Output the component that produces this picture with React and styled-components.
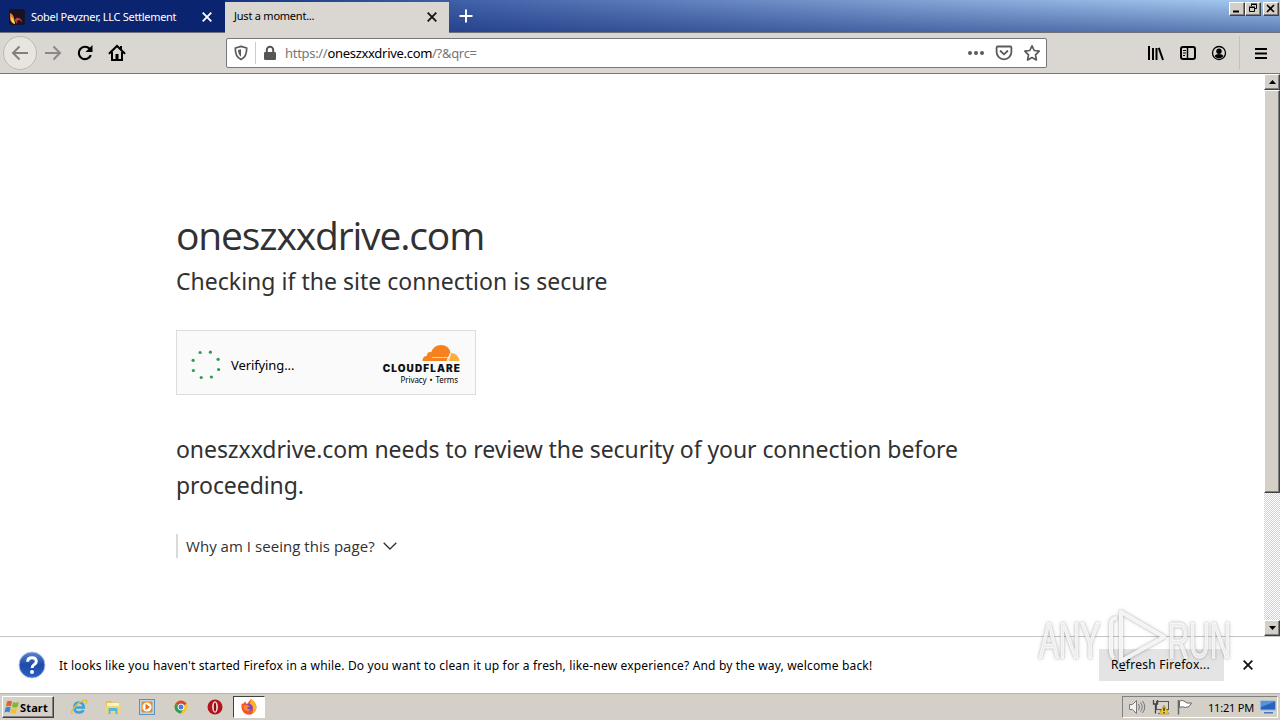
import React from "react";
import styled, { createGlobalStyle } from "styled-components";

const App = () => {
  return (
    <Screen>
      <GlobalStyle />
      <TabBar>
        <Tab>
          <FaviconIcon />
          <TabTitle $spacing="-0.3px">Sobel Pevzner, LLC Settlement</TabTitle>
          <CloseIcon color="#fff" />
        </Tab>
        <Tab $active>
          <TabTitle $spacing="-0.23px">Just a moment...</TabTitle>
          <CloseIcon color="#111" />
        </Tab>
        <NewTab>
          <PlusIcon />
        </NewTab>
        <WindowButtons />
      </TabBar>
      <Toolbar />
      <Main>
        <Page />
        <ScrollBar />
      </Main>
      <Notice />
      <TaskBar />
      <Watermark />
    </Screen>
  );
};

export default App;

const WindowButtons = () => {
  return (
    <WinGroup>
      <WinButton>
        <svg width="13" height="11" viewBox="0 0 13 11">
          <path d="M3 8.5h6" stroke="#000" strokeWidth="2" />
        </svg>
      </WinButton>
      <WinButton>
        <svg width="13" height="11" viewBox="0 0 13 11" fill="none" stroke="#000">
          <path d="M5.5 3V1.5h5v4H9M5 1h6" />
          <path d="M3.5 4.5h5v4h-5zM3 4h6" />
        </svg>
      </WinButton>
      <WinButton $gap>
        <svg width="13" height="11" viewBox="0 0 13 11">
          <path d="M3 2l7 7M10 2L3 9" stroke="#000" strokeWidth="1.6" />
        </svg>
      </WinButton>
    </WinGroup>
  );
};

const Toolbar = () => {
  return (
    <ToolRow>
      <BackButton>
        <svg width="20" height="20" viewBox="0 0 20 20" fill="none" stroke="#82807d" strokeWidth="2">
          <path d="M18 10H3M9.5 3.5L3 10l6.5 6.5" />
        </svg>
      </BackButton>
      <ToolButton>
        <svg width="20" height="20" viewBox="0 0 20 20" fill="none" stroke="#8b8986" strokeWidth="2">
          <path d="M2 10h15M10.5 3.5L17 10l-6.5 6.5" />
        </svg>
      </ToolButton>
      <ToolButton>
        <svg width="18" height="18" viewBox="0 0 18 18" fill="none" stroke="#000" strokeWidth="2.2">
          <path d="M14.8 11.2A6.2 6.2 0 1 1 13.6 4.8" />
          <path d="M16.5 1v7H9.5z" fill="#000" stroke="none" />
        </svg>
      </ToolButton>
      <ToolButton>
        <svg width="18" height="18" viewBox="0 0 18 18">
          <path d="M1.5 9.3L9 2l7.5 7.3" fill="none" stroke="#000" strokeWidth="2" strokeLinecap="round" />
          <path d="M4 8v8h10V8" fill="none" stroke="#000" strokeWidth="2" />
          <path d="M7.5 10h3v6h-3zM12 2h2v4h-2z" fill="#000" />
        </svg>
      </ToolButton>
      <UrlBar>
        <ShieldBox>
          <svg width="14" height="16" viewBox="0 0 14 16">
            <path d="M7 1.4L12.7 3c.1 5.8-1.3 9.6-5.7 11.5C2.6 12.6 1.2 8.8 1.3 3z" fill="none" stroke="#5a5a5a" strokeWidth="1.7" strokeLinejoin="round" />
            <path d="M7 4.2L4 5c.2 3.3 1 5.3 3 6.7z" fill="#5a5a5a" />
          </svg>
        </ShieldBox>
        <LockBox>
          <svg width="14" height="16" viewBox="0 0 14 16">
            <rect x="1" y="7" width="12" height="8" rx="1.2" fill="#555" />
            <path d="M3.8 8V5a3.2 3.2 0 0 1 6.4 0v3" fill="none" stroke="#555" strokeWidth="2" />
          </svg>
        </LockBox>
        <Url>
          https://<UrlHost>oneszxxdrive.com</UrlHost>/?&amp;qrc=
        </Url>
        <UrlActions>
          <svg width="18" height="16" viewBox="0 0 18 16" fill="#5a5a5a">
            <circle cx="3" cy="8" r="2" />
            <circle cx="9" cy="8" r="2" />
            <circle cx="15" cy="8" r="2" />
          </svg>
          <svg width="18" height="16" viewBox="0 0 18 16" fill="none" stroke="#5a5a5a" strokeWidth="1.8">
            <path d="M2.8 1.5h12.4q1.2 0 1.2 1.2V7a7.4 7.4 0 0 1-14.8 0V2.7q0-1.2 1.2-1.2z" />
            <path d="M5.5 6L9 9.3 12.5 6" strokeLinecap="round" />
          </svg>
          <svg width="18" height="18" viewBox="0 0 18 18" fill="none" stroke="#5a5a5a" strokeWidth="1.7">
            <path d="M9 1.8l2.2 4.7 5 .7-3.7 3.6.9 5.2L9 13.5 4.6 16l.9-5.2L1.8 7.2l5-.7z" strokeLinejoin="round" />
          </svg>
        </UrlActions>
      </UrlBar>
      <RightTools>
        <svg width="18" height="16" viewBox="0 0 18 16" stroke="#000" strokeWidth="2">
          <path d="M2 1v14M6 3v12M9.5 3v12M11.8 2.8L16 15" fill="none" />
        </svg>
        <svg width="18" height="16" viewBox="0 0 18 16" fill="none" stroke="#000">
          <rect x="2" y="2" width="14" height="12" rx="2" strokeWidth="2" />
          <path d="M8.5 2v12" strokeWidth="1.5" />
          <path d="M4 5.5h3M4 8h3M4 10.5h2" />
        </svg>
        <svg width="16" height="16" viewBox="0 0 16 16">
          <circle cx="8" cy="8" r="6.5" fill="none" stroke="#000" strokeWidth="1.3" />
          <circle cx="8" cy="6.3" r="2.7" />
          <path d="M3.5 11q1-2 4.5-2t4.5 2Q11 13.3 8 13.3T3.5 11z" />
        </svg>
      </RightTools>
      <MenuButton>
        <svg width="12" height="13" viewBox="0 0 12 13" stroke="#000" strokeWidth="2">
          <path d="M0 2h12M0 6.5h12M0 11h12" />
        </svg>
      </MenuButton>
    </ToolRow>
  );
};

const Page = () => {
  return (
    <Content>
      <Title>oneszxxdrive.com</Title>
      <SubTitle>Checking if the site connection is secure</SubTitle>
      <Challenge>
        <Spinner />
        <Verifying>Verifying...</Verifying>
        <Brand>
          <CloudIcon />
          <BrandName>CLOUDFLARE</BrandName>
          <BrandLinks>
            <span>Privacy</span>
            <span>•</span>
            <span>Terms</span>
          </BrandLinks>
        </Brand>
      </Challenge>
      <Message>
        oneszxxdrive.com needs to review the security of your connection before
        <br />
        proceeding.
      </Message>
      <Why>
        <span>Why am I seeing this page?</span>
        <svg width="14" height="8" viewBox="0 0 14 8" fill="none" stroke="#333" strokeWidth="1.3">
          <path d="M.7 .7L7 7 13.3 .7" />
        </svg>
      </Why>
    </Content>
  );
};

const Spinner = () => {
  const dots = [
    [9.5, 3.5], [19.8, 3.2], [27.5, 10.3], [28, 20.5],
    [20.8, 28], [10.6, 28.5], [2.8, 21.5], [2.5, 11.3],
  ];
  return (
    <svg width="31" height="32" viewBox="0 0 31 32">
      {dots.map(([x, y]) => (
        <circle key={x} cx={x - 0.4} cy={y} r="1.6" fill="#2f9a55" />
      ))}
    </svg>
  );
};

const ScrollBar = () => {
  return (
    <Track>
      <ArrowButton>
        <svg width="7" height="4" viewBox="0 0 7 4">
          <path d="M0 4L3.5 0 7 4z" />
        </svg>
      </ArrowButton>
      <Thumb />
      <ArrowButton $bottom>
        <svg width="7" height="4" viewBox="0 0 7 4">
          <path d="M0 0h7L3.5 4z" />
        </svg>
      </ArrowButton>
    </Track>
  );
};

const Notice = () => {
  return (
    <NoticeBar>
      <svg width="28" height="28" viewBox="0 0 28 28">
        <defs>
          <linearGradient id="help" x1="0" y1="0" x2="0" y2="1">
            <stop offset="0" stopColor="#5c83cf" />
            <stop offset=".5" stopColor="#1d4aa8" />
            <stop offset="1" stopColor="#2d62c4" />
          </linearGradient>
        </defs>
        <circle cx="14" cy="14" r="13" fill="url(#help)" stroke="#a9bfe6" />
        <path d="M9.6 10.8Q9.8 6.8 14 6.8t4.3 3.7q0 2-2.3 3.3-1.9 1.1-1.9 3.2" fill="none" stroke="#fff" strokeWidth="3" />
        <circle cx="14" cy="21" r="2" fill="#fff" />
      </svg>
      <NoticeText>
        It looks like you haven't started Firefox in a while. Do you want to clean it up for a fresh, like-new experience? And by the way, welcome back!
      </NoticeText>
      <RefreshButton>
        R<u>e</u>fresh Firefox...
      </RefreshButton>
      <NoticeClose>
        <CloseIcon color="#111" />
      </NoticeClose>
    </NoticeBar>
  );
};

const TaskBar = () => {
  return (
    <Tasks>
      <StartButton>
        <WindowsIcon />
        <span>Start</span>
      </StartButton>
      <QuickLaunch>
        <IeIcon />
        <FolderIcon />
        <PlayerIcon />
        <ChromeIcon />
        <OperaIcon />
      </QuickLaunch>
      <ActiveTask>
        <FirefoxIcon />
      </ActiveTask>
      <Tray>
        <SpeakerIcon />
        <NetworkIcon />
        <FlagIcon />
        <Clock>11:21 PM</Clock>
        <DesktopIcon />
      </Tray>
    </Tasks>
  );
};

const Watermark = () => {
  return (
    <Mark>
      <svg width="210" height="76" viewBox="0 0 210 76">
        <g fill="#fff" fillOpacity=".75" stroke="#fff" strokeOpacity=".7" strokeWidth="1.5" fontFamily="Liberation Sans Narrow, Liberation Sans, sans-serif" fontSize="50">
          <text x="9" y="54" textLength="61" lengthAdjust="spacingAndGlyphs">ANY</text>
          <text x="138" y="54" textLength="63" lengthAdjust="spacingAndGlyphs">RUN</text>
        </g>
        <g fill="none" stroke="#fff" strokeOpacity=".85" strokeWidth="4" strokeLinejoin="round">
          <path d="M91 8L134 33 91 57z" />
          <path d="M87 14q-6 0-6 6v26q0 6 3 8" />
        </g>
      </svg>
    </Mark>
  );
};

const CloseIcon = ({ color }) => (
  <svg width="12" height="12" viewBox="0 0 12 12">
    <path d="M1.7 1.7l8.6 8.6M10.3 1.7L1.7 10.3" stroke={color} strokeWidth="1.8" />
  </svg>
);

const PlusIcon = () => (
  <svg width="14" height="14" viewBox="0 0 14 14">
    <path d="M7 .5v13M.5 7h13" stroke="#fff" strokeWidth="2" />
  </svg>
);

const FaviconIcon = () => (
  <svg width="16" height="16" viewBox="0 0 16 16">
    <rect width="16" height="16" rx="3" fill="#171321" />
    <path d="M1 4q3 1 4 5l1 6Q1 14 1 9z" fill="#e8862c" />
    <path d="M2 8q3 2 4 7-4-1-4-7z" fill="#f7dc4c" />
    <path d="M6 12q0-4 4-3 3 1 3 5-1-3-3-3t-2 4z" fill="#c83a4a" />
  </svg>
);

const CloudIcon = () => (
  <svg width="38" height="18" viewBox="0 0 38 18">
    <path d="M.5 17Q.5 12 5 11.8 5 7.500 9 8.200 12 1 19 1q8 0 9.500 8L26 17z" fill="#f6821f" />
    <path d="M27 17l2-8q7 0 8.500 8z" fill="#fbad41" />
    <path d="M10 13.500h17" stroke="#fcd3a8" strokeWidth="1" />
    <path d="M25 17l3.500-8" stroke="#fff" strokeWidth="1" />
  </svg>
);

const WindowsIcon = () => (
  <svg width="16" height="16" viewBox="0 0 16 16">
    <path d="M3 2.5q2.5-1.5 5 0L7 7.5q-2.5-1.5-5 0z" fill="#e3622a" />
    <path d="M9 3q2.5 1.5 6 0l-1.5 5q-3 1-5.5 0z" fill="#7cb83c" />
    <path d="M1.7 8.500q2.500-1.500 5 0l-1.200 5q-2.500-1.500-5 0z" fill="#3c86d2" />
    <path d="M7.700 9q2.500 1.500 5.500 0L12 14q-3 1-5.500 0z" fill="#f2c22e" />
  </svg>
);

const IeIcon = () => (
  <svg width="18" height="18" viewBox="0 0 18 18" fill="none">
    <path d="M4.5 9.5h9.3Q13.5 4.5 9 4.5T4.3 9.5t5 5q3 0 4.2-2.3" stroke="#3aa2dc" strokeWidth="2.6" />
    <path d="M2.5 16Q-.5 14.5 5 8.5q6-6 10.500-6.500 2.500 0 .5 4" stroke="#e8bf3c" strokeWidth="1.4" />
  </svg>
);

const FolderIcon = () => (
  <svg width="18" height="18" viewBox="0 0 18 18">
    <path d="M2 3h5l1 1.5h7V15H2z" fill="#e2c25c" />
    <path d="M3 5h12v4H3z" fill="#fbf3c0" />
    <path d="M1.5 8h15v7h-15z" fill="#f0d67a" />
    <path d="M4.5 16v-5q0-1 1-1h7q1 0 1 1v5h-2v-3h-5v3z" fill="#58b5dd" />
  </svg>
);

const PlayerIcon = () => (
  <svg width="18" height="18" viewBox="0 0 18 18">
    <rect x="1.5" y="1.5" width="15" height="15" fill="#b8d7ee" stroke="#4f94cc" />
    <rect x="3.5" y="3.5" width="11" height="11" rx="1" fill="#f08a1c" />
    <circle cx="9" cy="9" r="4.5" fill="#fff" />
    <path d="M7.5 5.8L12 9l-4.5 3.2z" fill="#e56f10" />
  </svg>
);

const ChromeIcon = () => (
  <svg width="18" height="18" viewBox="0 0 18 18">
    <circle cx="9" cy="9" r="6.5" fill="#f6c72c" />
    <path d="M3.4 5.8A6.5 6.5 0 0 1 14.6 5.8L9 9z" fill="#dc4437" />
    <path d="M3.4 5.8A6.5 6.5 0 0 0 9 15.5L11 11 9 9z" fill="#2f9d58" />
    <circle cx="9" cy="9" r="3" fill="#3f7fe0" stroke="#fff" />
  </svg>
);

const OperaIcon = () => (
  <svg width="18" height="18" viewBox="0 0 18 18">
    <circle cx="9" cy="9" r="7.5" fill="#b3141b" />
    <ellipse cx="9" cy="9" rx="2.9" ry="5.7" fill="#f3dcdc" />
    <ellipse cx="9" cy="9" rx="1.200" ry="4.500" fill="#8c0e14" />
  </svg>
);

const FirefoxIcon = () => (
  <svg width="18" height="18" viewBox="0 0 18 18">
    <path d="M2 5q0 1 1 1 1-2 2.5-2.5Q5.5 5 7 6l4-5q5 3 5.5 8a7.5 7.5 0 0 1-15 .5Q1.3 7 2 5z" fill="#f7522f" />
    <path d="M11 1q5 3 5.5 8a7 7 0 0 1-4.5 6.5Q15 9 10 6z" fill="#fcb827" />
    <circle cx="9" cy="9.5" r="3.5" fill="#7b43d6" />
    <path d="M3.5 8q2-1.5 4.5-.5l2 .5-3 2q1 2 4 1-2 3-5 1.5T3.5 8z" fill="#fb8a2a" />
  </svg>
);

const SpeakerIcon = () => (
  <svg width="18" height="16" viewBox="0 0 18 16" fill="none" stroke="#77787a">
    <path d="M1.5 5.5h3l4-4v13l-4-4h-3z" fill="#f2f2f0" />
    <path d="M10.5 5q2 3 0 6M12.5 3.5q3.5 4.5 0 9M14.5 2q4.5 6 0 12" />
  </svg>
);

const NetworkIcon = () => (
  <svg width="18" height="16" viewBox="0 0 18 16">
    <rect x="4.5" y="2.5" width="12" height="8" fill="#d5d5d2" stroke="#555" />
    <path d="M9 11v4M6 14.5h7" stroke="#555" />
    <path d="M1.5 1v4h4V1M3.5 5v9.5" fill="none" stroke="#444" strokeWidth="1.3" />
    <path d="M12 6l5 9H7z" fill="#f4cd22" stroke="#a9850c" strokeWidth=".6" />
    <path d="M12 8.5v3.5M12 13v1.2" stroke="#222" strokeWidth="1.3" />
  </svg>
);

const FlagIcon = () => (
  <svg width="18" height="16" viewBox="0 0 18 16">
    <path d="M2.5 1v14.5" stroke="#666" strokeWidth="1.5" />
    <path d="M3.5 2q3-1.5 5.5.5 1 1 2 1.500h4.500q-2 5-6 4.500-3-1.500-6 0z" fill="#fff" stroke="#666" />
  </svg>
);

const DesktopIcon = () => (
  <svg width="16" height="14" viewBox="0 0 16 14">
    <path d="M.5 1h15v9H.5z" fill="#2563bd" stroke="#8fb4de" />
    <path d="M1 1.5h14L1 7z" fill="#5a93dc" />
    <path d="M4 12h9v1.5H4z" fill="#4c78b5" />
  </svg>
);

const GlobalStyle = createGlobalStyle`
  * {
    box-sizing: border-box;
  }
  body {
    margin: 0;
    overflow: hidden;
    font-family: "Noto Sans", "Open Sans", sans-serif;
    color: #000;
  }
  svg {
    display: block;
    flex: none;
  }
`;

const Screen = styled.div`
  position: relative;
  width: 1280px;
  height: 720px;
  display: flex;
  flex-direction: column;
  background: #fff;
  overflow: hidden;
  white-space: nowrap;
`;

const TabBar = styled.div`
  display: flex;
  height: 33px;
  flex: none;
  border-bottom: 1px solid #6e7075;
  background:
    linear-gradient(to bottom, rgba(0, 0, 0, 0), rgba(10, 35, 110, 0.48)),
    linear-gradient(to right, #0a246a, #0f2f80 200px, #4061a8 460px, #7f9fd3 900px, #a6cdf2);
`;

const Tab = styled.div`
  display: flex;
  align-items: center;
  width: ${(props) => (props.$active ? "224px" : "225px")};
  height: ${(props) => (props.$active ? "31px" : "32px")};
  margin-top: ${(props) => (props.$active ? "2px" : "0")};
  margin-bottom: -1px;
  padding: ${(props) => (props.$active ? "0 11px 2px 9px" : "2px 12px 0 9px")};
  color: ${(props) => (props.$active ? "#000" : "#fff")};
  background: ${(props) => (props.$active ? "#dad6d1" : "#0a246f")};
  gap: 6px;
`;

const TabTitle = styled.span`
  flex: 1;
  font-size: 11px;
  line-height: 14px;
  padding-bottom: 1px;
  letter-spacing: ${(props) => props.$spacing};
`;

const NewTab = styled.div`
  flex: 1;
  padding: 9px 0 0 10px;
`;

const WinGroup = styled.div`
  display: flex;
  padding: 2px 1px 0 0;
`;

const WinButton = styled.div`
  width: 16px;
  height: 14px;
  margin-left: ${(props) => (props.$gap ? "2px" : "0")};
  background: #d4d0c8;
  border: 1px solid;
  border-color: #fff #404040 #404040 #fff;
  box-shadow: inset -1px -1px #808080;
`;

const ToolRow = styled.div`
  display: flex;
  align-items: center;
  flex: none;
  height: 41px;
  padding: 0 0 0 3px;
  background: #dad6d1;
  border-bottom: 1px solid #77777a;
`;

const BackButton = styled.div`
  display: flex;
  align-items: center;
  justify-content: center;
  width: 34px;
  height: 34px;
  border-radius: 50%;
  border: 1px solid #bdb9b4;
  background: #e8e5e1;
`;

const ToolButton = styled.div`
  display: flex;
  align-items: center;
  justify-content: center;
  width: 32px;
  height: 32px;
`;

const UrlBar = styled.div`
  display: flex;
  align-items: center;
  width: 821px;
  height: 30px;
  margin-left: 93px;
  background: #fff;
  border: 1px solid #77777a;
  border-radius: 2px;
`;

const ShieldBox = styled.div`
  width: 29px;
  padding-left: 7px;
  height: 22px;
  display: flex;
  align-items: center;
  border-right: 1px solid #ccc;
`;

const LockBox = styled.div`
  width: 29px;
  padding-left: 7px;
`;

const Url = styled.span`
  flex: 1;
  font-size: 13px;
  color: #777;
  letter-spacing: -0.3px;
`;

const UrlHost = styled.span`
  color: #000;
`;

const UrlActions = styled.div`
  display: flex;
  align-items: center;
  gap: 10px;
  padding-right: 5px;
`;

const RightTools = styled.div`
  flex: 1;
  display: flex;
  align-items: center;
  justify-content: flex-end;
  gap: 14px;
  padding-right: 12px;
`;

const MenuButton = styled.div`
  width: 41px;
  height: 34px;
  padding-left: 15px;
  display: flex;
  align-items: center;
  border-left: 1px solid #c5c1bc;
`;

const Main = styled.div`
  display: flex;
  flex: none;
  height: 562px;
`;

const Content = styled.div`
  flex: 1;
  padding: 131px 0 0 176px;
  color: #313131;
`;

const Title = styled.h1`
  margin: 0;
  height: 60px;
  font-family: "Open Sans", "Noto Sans", sans-serif;
  font-weight: 400;
  font-size: 39px;
  line-height: 60px;
  letter-spacing: -1.15px;
`;

const SubTitle = styled.h2`
  margin: 0;
  font-weight: 400;
  font-size: 23px;
  line-height: 32px;
  letter-spacing: 0.02px;
`;

const Challenge = styled.div`
  display: flex;
  align-items: center;
  width: 300px;
  height: 65px;
  margin-top: 33px;
  padding: 4px 15px 0 14px;
  background: #fafafa;
  border: 1px solid #ddd;
`;

const Verifying = styled.span`
  flex: 1;
  margin-left: 9px;
  font-size: 13px;
  letter-spacing: -0.1px;
  color: #000;
`;

const Brand = styled.div`
  display: flex;
  flex-direction: column;
  align-items: flex-end;
`;

const BrandName = styled.span`
  margin-top: 1px;
  font-family: Inter, "Liberation Sans", sans-serif;
  font-weight: 900;
  font-size: 10px;
  line-height: 10px;
  letter-spacing: 1.1px;
  margin-right: -1px;
  color: #111;
`;

const BrandLinks = styled.div`
  display: flex;
  gap: 3px;
  margin: 1px 2px 1px 0;
  font-size: 8px;
  line-height: 11px;
  letter-spacing: -0.1px;
  color: #000;
`;

const Message = styled.p`
  margin: 36px 0 0;
  font-size: 23px;
  line-height: 36px;
  letter-spacing: -0.07px;
`;

const Why = styled.div`
  display: flex;
  align-items: center;
  height: 24px;
  margin-top: 31px;
  padding-left: 8px;
  gap: 8px;
  font-family: "Open Sans", "Noto Sans", sans-serif;
  font-size: 15px;
  letter-spacing: 0.04px;
  border-left: 2px solid #d9d9d9;
`;

const Track = styled.div`
  display: flex;
  flex-direction: column;
  width: 16px;
  background: repeating-conic-gradient(#d4d0c8 0 25%, #fff 0 50%) 0 0 / 2px 2px;
`;

const ArrowButton = styled.div`
  display: flex;
  align-items: center;
  justify-content: center;
  height: 16px;
  margin-top: ${(props) => (props.$bottom ? "auto" : "0")};
  background: #d4d0c8;
  border: 1px solid;
  border-color: #fff #404040 #404040 #fff;
  box-shadow: inset -1px -1px #808080;
`;

const Thumb = styled.div`
  height: 403px;
  background: #d4d0c8;
  border: 1px solid;
  border-color: #fff #404040 #404040 #fff;
  box-shadow: inset -1px -1px #808080;
`;

const NoticeBar = styled.div`
  display: flex;
  align-items: center;
  flex: none;
  height: 57px;
  padding: 0 26px 0 18px;
  border-top: 1px solid #c5c5c5;
`;

const NoticeText = styled.span`
  flex: 1;
  margin-left: 13px;
  font-size: 12px;
  letter-spacing: 0.17px;
`;

const RefreshButton = styled.div`
  width: 125px;
  height: 32px;
  line-height: 32px;
  padding-right: 2px;
  text-align: center;
  font-size: 12px;
  letter-spacing: 0.27px;
  background: #e4e4e4;
`;

const NoticeClose = styled.div`
  margin-left: 18px;
`;

const Tasks = styled.div`
  display: flex;
  align-items: center;
  flex: none;
  height: 27px;
  padding: 0 2px 0;
  background: #d4d0c8;
  border-top: 1px solid #b9b5ae;
`;

const StartButton = styled.div`
  display: flex;
  align-items: center;
  width: 52px;
  height: 22px;
  padding-left: 1px;
  font-size: 11px;
  font-weight: 700;
  letter-spacing: 0.15px;
  border: 1px solid;
  border-color: #fff #404040 #404040 #fff;
  box-shadow: inset -1px -1px #808080;
`;

const QuickLaunch = styled.div`
  display: flex;
  gap: 16px;
  margin-left: 16px;
`;

const ActiveTask = styled.div`
  display: flex;
  align-items: center;
  justify-content: center;
  width: 32px;
  height: 22px;
  margin-left: 9px;
  background: #fff;
  border: 1px solid;
  border-color: #404040 #fff #fff #404040;
`;

const Tray = styled.div`
  display: flex;
  align-items: center;
  width: 156px;
  height: 22px;
  margin-left: auto;
  padding: 0 1px 0 5px;
  gap: 6px;
  border: 1px solid;
  border-color: #808080 #fff #fff #808080;
`;

const Clock = styled.span`
  flex: 1;
  text-align: right;
  font-size: 11px;
  letter-spacing: -0.2px;
`;

const Mark = styled.div`
  position: absolute;
  left: 1030px;
  top: 604px;
  filter: drop-shadow(0 0 1px rgba(0, 0, 0, 0.3)) drop-shadow(0 0 2px rgba(0, 0, 0, 0.15));
`;
